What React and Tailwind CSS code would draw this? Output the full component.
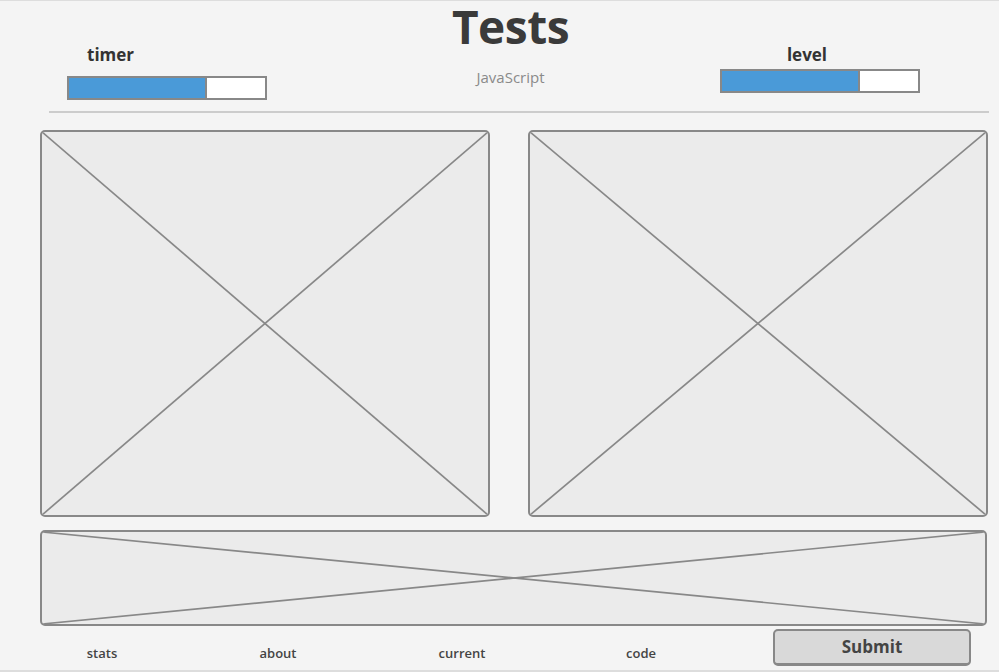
import React from 'react';

function Placeholder({ className }) {
  return (
    <div className={`relative border-2 border-[#888] rounded-[5px] bg-[#ebebeb] overflow-hidden ${className}`}>
      <svg className="absolute inset-0 w-full h-full" preserveAspectRatio="none" viewBox="0 0 100 100">
        <line x1="0" y1="0" x2="100" y2="100" stroke="#888" strokeWidth="1.7" vectorEffect="non-scaling-stroke" />
        <line x1="100" y1="0" x2="0" y2="100" stroke="#888" strokeWidth="1.7" vectorEffect="non-scaling-stroke" />
      </svg>
    </div>
  );
}

function Bar() {
  return (
    <div className="flex w-[200px] h-[24px] border-2 border-[#888] bg-white">
      <div className="w-[138px] h-full bg-[#4a9ad8] border-r-2 border-[#888]" />
    </div>
  );
}

export default function App() {
  const links = [
    { label: 'stats', w: 'w-[124px]' },
    { label: 'about', w: 'w-[228px]' },
    { label: 'current', w: 'w-[140px]' },
    { label: 'code', w: 'w-[218px]' },
  ];

  return (
    <div className="w-[999px] h-[672px] bg-[#f4f4f4] border-t border-b-2 border-[#dddddd] flex flex-col font-['Open_Sans',sans-serif] overflow-hidden">
      {/* header */}
      <div className="flex h-[110px] pl-[67px]">
        <div className="w-[200px] pt-[43px]">
          <div className="pl-[20px] text-[17px] leading-[22px] font-bold text-[#333]">timer</div>
          <div className="mt-[10px]">
            <Bar />
          </div>
        </div>
        <div className="w-[453px] pl-[34px] text-center">
          <h1 className="text-[46px] leading-[50px] font-bold text-[#3a3a3a] tracking-[-0.5px]">Tests</h1>
          <p className="mt-[16px] text-[15px] leading-[20px] font-normal text-[#8a8a8a]">JavaScript</p>
        </div>
        <div className="w-[200px] pt-[43px]">
          <div className="pr-[26px] text-center text-[17px] leading-[22px] font-bold text-[#333]">level</div>
          <div className="mt-[3px]">
            <Bar />
          </div>
        </div>
      </div>
      <div className="ml-[49px] w-[940px] h-[2px] bg-[#cccccc]" />

      {/* content */}
      <div className="flex gap-[38px] pl-[40px] mt-[17px]">
        <Placeholder className="w-[450px] h-[387px]" />
        <Placeholder className="w-[460px] h-[387px]" />
      </div>
      <Placeholder className="ml-[40px] mt-[13px] w-[947px] h-[96px]" />

      {/* footer */}
      <div className="flex pl-[40px]">
        {links.map((l) => (
          <div key={l.label} className={`${l.w} pt-[19px] text-center text-[13px] leading-[16px] font-semibold text-[#444]`}>
            {l.label}
          </div>
        ))}
        <button className="ml-[23px] mt-[3px] w-[198px] h-[37px] flex items-center justify-center bg-[#d9d9d9] border-2 border-b-[3px] border-[#888] rounded-[5px] text-[17px] leading-[22px] font-bold text-[#444]">
          Submit
        </button>
      </div>
    </div>
  );
}
